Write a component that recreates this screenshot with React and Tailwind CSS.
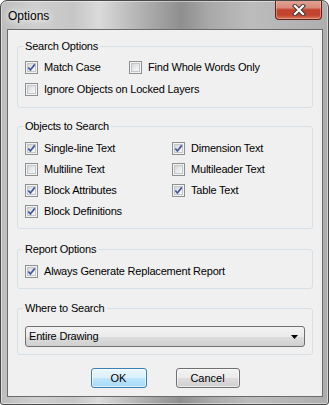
import React from "react";

const font = { fontFamily: '"Liberation Sans", Arial, sans-serif' };

function Check({ checked }) {
  return (
    <span className="relative inline-block w-[13px] h-[13px] shrink-0 border border-[#8e8f8f] bg-[#f4f4f4]">
      <span className="absolute left-[1px] top-[1px] w-[9px] h-[9px] border border-[#c2c5c9] bg-[linear-gradient(135deg,#d4d6d9_0%,#eceded_60%,#f7f7f7_100%)]" />
      {checked && (
        <svg className="absolute left-0 top-0" width="11" height="11" viewBox="0 0 11 11">
          <path d="M2.3 5.5 L4.4 8 L8.8 2.4" fill="none" stroke="#4357a0" strokeWidth="1.7" strokeLinejoin="miter" strokeLinecap="butt" />
        </svg>
      )}
    </span>
  );
}

function Item({ checked, label, className = "" }) {
  return (
    <div className={"flex items-center h-[16px] gap-[6px] " + className}>
      <Check checked={checked} />
      <span className="text-[11px] leading-[13px] tracking-[-0.2px] text-black whitespace-nowrap">{label}</span>
    </div>
  );
}

function Group({ title, className = "", children }) {
  return (
    <fieldset className={"border border-[#d5dfe5] rounded-[3px] px-[7px] " + className}>
      <legend className="-ml-[2px] px-[2px] text-[11px] leading-[14px] tracking-[-0.2px] text-black">{title}</legend>
      {children}
    </fieldset>
  );
}

export default function App() {
  return (
    <div style={font} className="w-[329px] h-[405px] flex flex-col rounded-t-[7px] rounded-b-[3px] border border-[#4a4a4a] bg-[linear-gradient(90deg,#bdbdbd_0%,#cfcfcf_10%,#c6c6c6_22%,#dadada_30%,#b4b4b4_42%,#8f8f8f_55%,#a9a9a9_64%,#bcbcbc_76%,#aeaeae_100%)] shadow-[inset_0_0_0_1px_rgba(255,255,255,0.45)] pl-[6px] pr-[5px] pb-[7px] overflow-hidden">
      <div className="h-[28px] flex items-start justify-between shrink-0">
        <span className="mt-[7px] ml-[1px] text-[12px] leading-[16px] text-black [text-shadow:0_0_6px_#ffffff,0_0_10px_#ffffff]">Options</span>
        <div className="-mt-px mr-px w-[47px] h-[20px] rounded-b-[4px] border border-[#5e2219] border-t-0 bg-[linear-gradient(180deg,#e2a597_0%,#d98a79_40%,#c2432e_52%,#c3452f_80%,#d8765a_100%)] shadow-[inset_0_0_0_1px_rgba(255,200,190,0.45)] flex items-center justify-center">
          <svg width="16" height="12" viewBox="0 0 16 12">
            <path d="M4 2 L12 10 M12 2 L4 10" stroke="#3a3a3a" strokeWidth="4.2" strokeLinecap="square" fill="none" />
            <path d="M4 2 L12 10 M12 2 L4 10" stroke="#ffffff" strokeWidth="2.2" strokeLinecap="square" fill="none" />
          </svg>
        </div>
      </div>
      <div className="flex-1 border border-[#6b6b6b] bg-[#f0f0f0] px-[9px] flex flex-col">
        <Group title="Search Options" className="mt-[9px] pt-[6px] pb-[10px]">
          <div className="flex">
            <Item checked label="Match Case" className="w-[104px]" />
            <Item label="Find Whole Words Only" />
          </div>
          <Item label="Ignore Objects on Locked Layers" className="mt-[6px]" />
        </Group>

        <Group title="Objects to Search" className="mt-[11px] pt-[7px] pb-[9px]">
          <div className="flex">
            <div className="w-[147px] flex flex-col gap-[5px]">
              <Item checked label="Single-line Text" />
              <Item label="Multiline Text" />
              <Item checked label="Block Attributes" />
              <Item checked label="Block Definitions" />
            </div>
            <div className="flex flex-col gap-[5px]">
              <Item checked label="Dimension Text" />
              <Item label="Multileader Text" />
              <Item checked label="Table Text" />
            </div>
          </div>
        </Group>

        <Group title="Report Options" className="mt-[13px] pt-[7px] pb-[9px]">
          <Item checked label="Always Generate Replacement Report" />
        </Group>

        <Group title="Where to Search" className="mt-[12px] pt-[11px] pb-[7px]">
          <div className="h-[21px] w-[280px] rounded-[3px] border border-[#707070] bg-[linear-gradient(180deg,#f2f2f2_0%,#ebebeb_50%,#dddddd_51%,#cfcfcf_100%)] flex items-center justify-between pl-[3px] pr-[6px]">
            <span className="text-[11px] leading-[13px] tracking-[-0.2px] text-black">Entire Drawing</span>
            <svg width="7" height="4" viewBox="0 0 7 4">
              <path d="M0 0 H7 L3.5 4 Z" fill="#000" />
            </svg>
          </div>
        </Group>

        <div className="mt-[13px] flex justify-center gap-[29px]">
          <button className="w-[56px] h-[20px] rounded-[3px] border border-[#3c7fb1] bg-[linear-gradient(180deg,#eaf6fd_0%,#d9f0fc_50%,#bee6fd_51%,#a7d9f5_100%)] shadow-[inset_0_0_0_1px_rgba(255,255,255,0.6)] text-[11px] leading-[13px] text-black">
            OK
          </button>
          <button className="w-[64px] h-[20px] rounded-[3px] border border-[#707070] bg-[linear-gradient(180deg,#f2f2f2_0%,#ebebeb_50%,#dddddd_51%,#cfcfcf_100%)] shadow-[inset_0_0_0_1px_rgba(255,255,255,0.6)] text-[11px] leading-[13px] text-black">
            Cancel
          </button>
        </div>
      </div>
    </div>
  );
}
